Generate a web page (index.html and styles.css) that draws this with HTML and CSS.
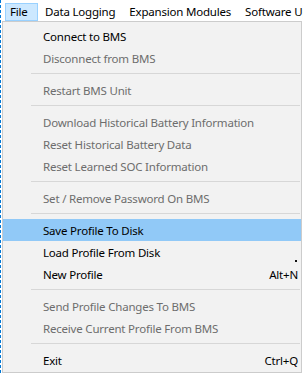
FILE: index.html
```html
<!DOCTYPE html>
<html lang="en">
<head>
    <meta charset="UTF-8">
    <meta name="viewport" content="width=device-width, initial-scale=1.0">
    <title>BMS - File menu</title>
    <link rel="stylesheet" href="styles.css">
</head>
<body>
    <div class="window">
        <div class="focus-edge"></div>

        <div class="main">
            <div class="menubar">
                <div class="menubar-item file open">File</div>
                <div class="menubar-item">Data Logging</div>
                <div class="menubar-item">Expansion Modules</div>
                <div class="menubar-item">Software Updates</div>
            </div>

            <div class="dropdown">
                <div class="item">Connect to BMS</div>
                <div class="item disabled">Disconnect from BMS</div>
                <div class="separator"></div>
                <div class="item disabled">Restart BMS Unit</div>
                <div class="separator"></div>
                <div class="item disabled">Download Historical Battery Information</div>
                <div class="item disabled">Reset Historical Battery Data</div>
                <div class="item disabled">Reset Learned SOC Information</div>
                <div class="separator"></div>
                <div class="item disabled">Set / Remove Password On BMS</div>
                <div class="separator"></div>
                <div class="item hover">Save Profile To Disk</div>
                <div class="item">Load Profile From Disk</div>
                <div class="item">New Profile <span class="shortcut">Alt+N</span></div>
                <div class="separator"></div>
                <div class="item disabled">Send Profile Changes To BMS</div>
                <div class="item disabled">Receive Current Profile From BMS</div>
                <div class="separator"></div>
                <div class="item">Exit <span class="shortcut">Ctrl+Q</span></div>

                <span class="speck"></span>
            </div>
        </div>
    </div>
</body>
</html>
```

FILE: styles.css
```css
* {
    margin: 0;
    padding: 0;
    box-sizing: border-box;
}

body {
    font-family: 'Noto Sans', 'Open Sans', Arial, sans-serif;
    font-size: 11.5px;
    letter-spacing: -0.2px;
    background: #ffffff;
    color: #000;
    width: 303px;
    height: 374px;
    overflow: hidden;
}

.window {
    display: flex;
    height: 374px;
}

.focus-edge {
    width: 1px;
    flex-shrink: 0;
    background: repeating-linear-gradient(to bottom, #0078d7 0 3px, transparent 3px 5px);
}

.main {
    flex: 1;
    min-width: 0;
}

/* top menu bar */
.menubar {
    display: flex;
    height: 21px;
    background: #fff;
    white-space: nowrap;
    overflow: hidden;
    padding-left: 4px;
}

.menubar-item {
    flex-shrink: 0;
    height: 18px;
    margin-top: 3px;
    padding: 0 6px;
    line-height: 16px;
    border: 1px solid transparent;
}

.menubar-item.file {
    width: 33px;
    padding: 0 0 0 4px;
}

.menubar-item.open {
    background: #cce8ff;
    border-color: #99d1ff;
}

/* dropdown */
.dropdown {
    position: relative;
    width: 300px;
    margin-left: 1px;
    background: #f2f2f2;
    border: 1px solid #cccccc;
    padding: 3px 0 1px;
}

.item {
    display: flex;
    justify-content: space-between;
    align-items: center;
    height: 22px;
    padding: 0 3px 0 40px;
    white-space: nowrap;
}

.item.disabled {
    color: #6d6d6d;
}

.item.hover {
    background: #91c9f7;
}

.separator {
    height: 10px;
    padding-top: 4px;
    margin: 0 1px 0 28px;
}

.separator::before {
    content: '';
    display: block;
    height: 1px;
    background: #d7d7d7;
}

.speck {
    position: absolute;
    left: 292px;
    top: 238px;
    width: 2px;
    height: 2px;
    background: #111;
}
```
